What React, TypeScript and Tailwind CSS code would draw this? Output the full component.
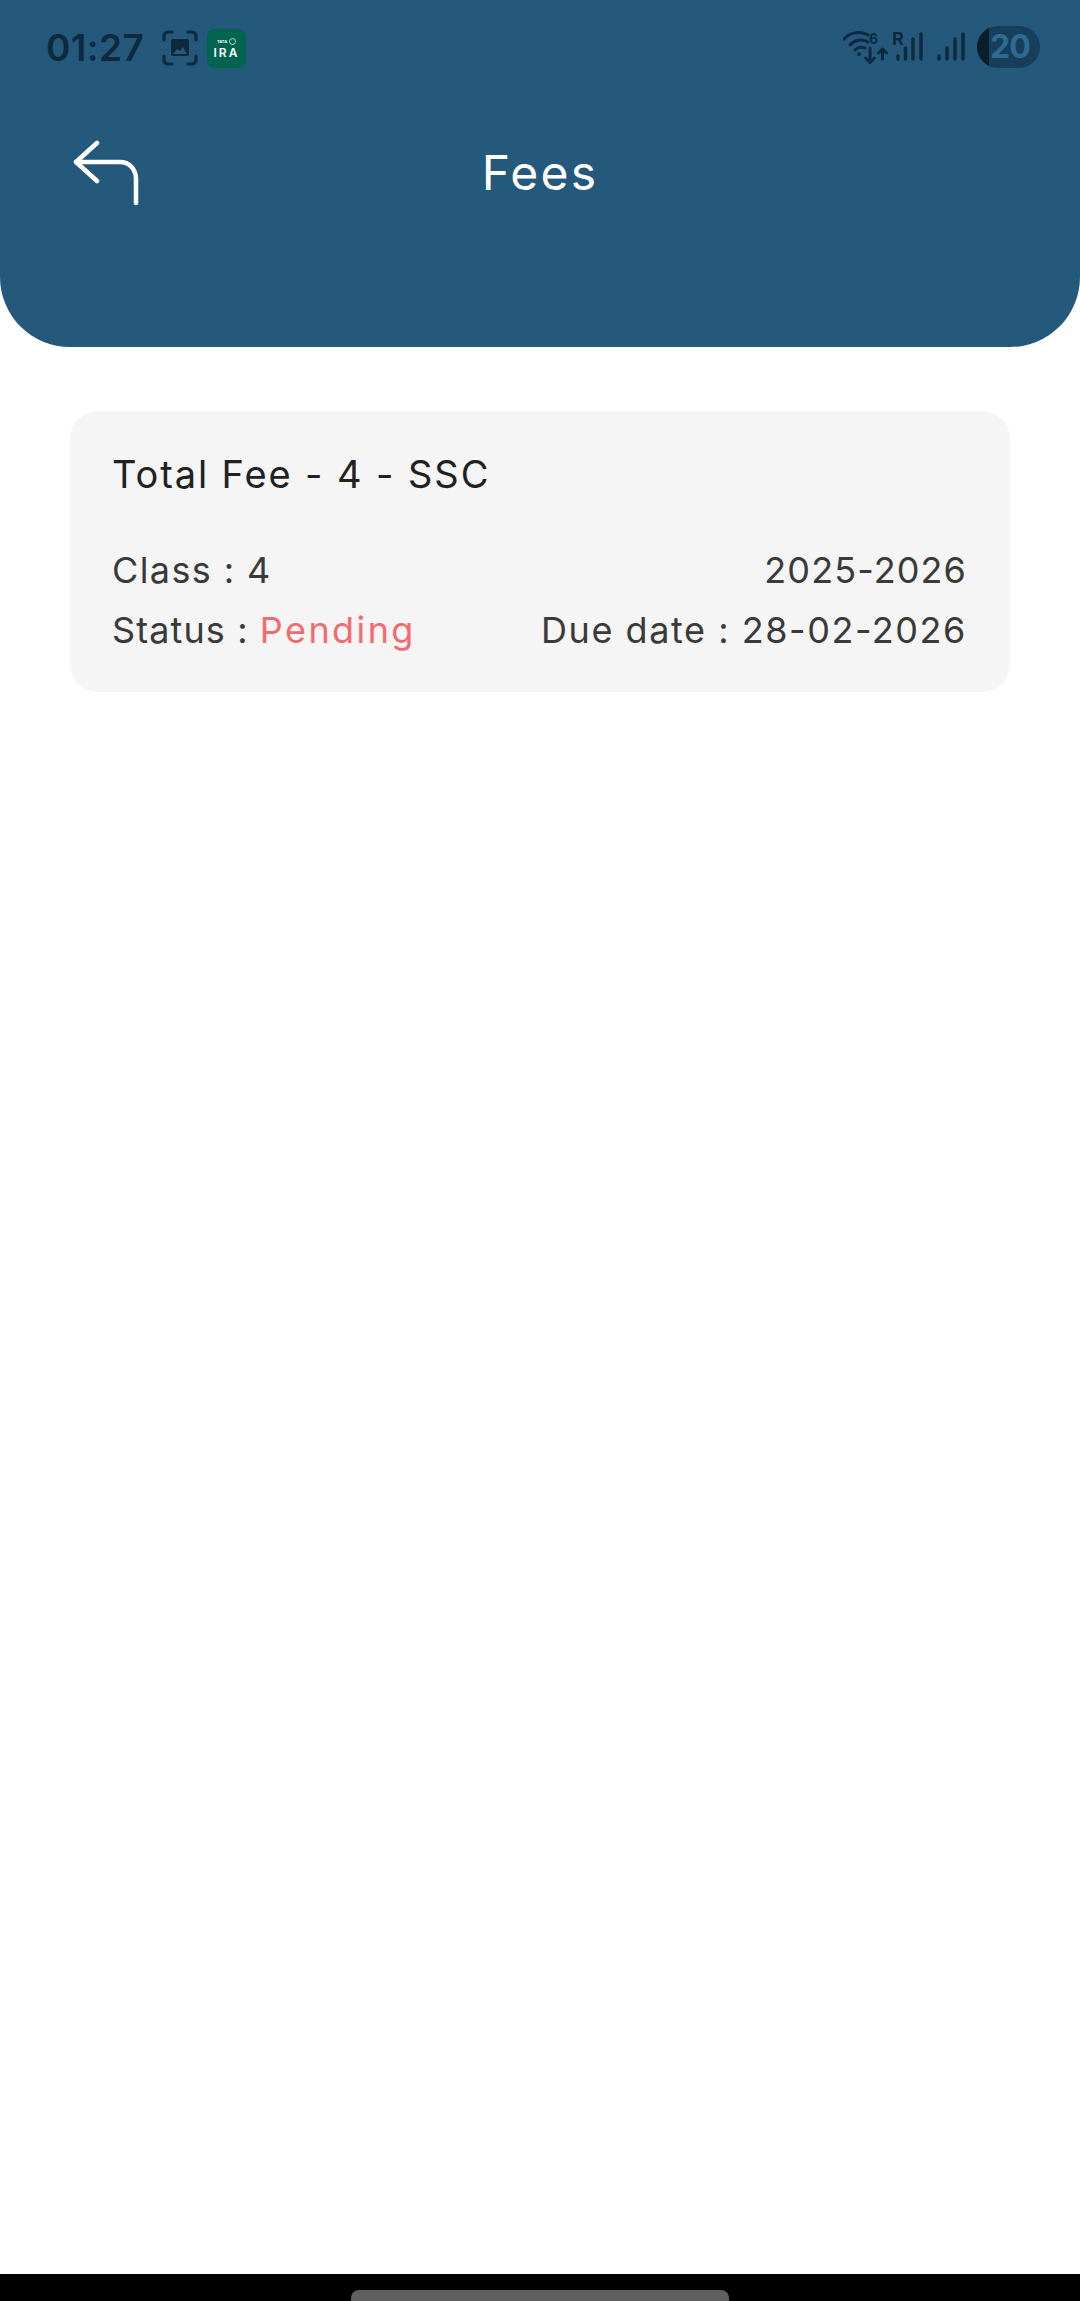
export default function App() {
  const font = { fontFamily: '"Inter", "Liberation Sans", sans-serif' };
  return (
    <div className="flex h-[2301px] w-[1080px] flex-col overflow-hidden bg-white" style={font}>
      <header className="h-[347px] shrink-0 rounded-b-[70px] bg-[#24597b]">
        <div className="flex h-[96px] items-start justify-between pl-[46px] pr-[40px] pt-[26px]">
          <div className="flex items-center">
            <span className="w-[116px] text-[37px] font-semibold leading-[44px] tracking-[0.4px] text-[#0e2a3e]">01:27</span>
            <svg className="h-[36px] w-[36px]" viewBox="0 0 36 36" fill="none">
              <path d="M2 10V6a4 4 0 0 1 4-4h4M26 2h4a4 4 0 0 1 4 4v4M34 26v4a4 4 0 0 1-4 4h-4M10 34H6a4 4 0 0 1-4-4v-4" stroke="#0e2a3e" strokeWidth="3.2" strokeLinecap="round" />
              <path d="M9 11a2 2 0 0 1 2-2h14a2 2 0 0 1 2 2v13a2 2 0 0 1-2 2H11a2 2 0 0 1-2-2z" fill="#0e2a3e" />
              <path d="M11 24l4-5 3 2 3-4 4 7z" fill="#24597b" />
            </svg>
            <div className="ml-[9px] flex h-[39px] w-[39px] flex-col items-center justify-center rounded-[8px] bg-[#00644f] text-white">
              <div className="flex items-center gap-[2px]">
                <span className="text-[4px] font-bold leading-[7px]">TATA</span>
                <span className="h-[7px] w-[7px] rounded-full border border-white/70" />
              </div>
              <span className="mt-[2px] text-[12px] font-semibold leading-[12px] tracking-[2px]">IRA</span>
            </div>
          </div>
          <div className="flex items-center">
            <svg className="h-[42px] w-[126px]" viewBox="0 0 126 42" fill="none">
              <g stroke="#0e2a3e" strokeWidth="3" strokeLinecap="round" strokeLinejoin="round">
                <path d="M1 13C6 7 17 4 25 9" />
                <path d="M7 19c3-4 11-7 18-3" />
                <path d="M12 24c3-3 7-3 10-2" />
                <path d="M27 22v14M22.500 32l4.500 4.500 4.500-4.500" />
                <path d="M39.500 33V23M35.500 27l4-4 4 4" />
                <path d="M55 33v-3M62.500 33V22M70 33V13M78 33V8" strokeWidth="3.5" />
                <path d="M96 33v-3M104 33V22M112 33V13M120 33V8" strokeWidth="3.5" />
              </g>
              <circle cx="16" cy="28" r="2" fill="#0e2a3e" />
              <text x="26" y="18" fontSize="14" fontWeight="700" fill="#0e2a3e">6</text>
              <text x="49" y="19" fontSize="18" fontWeight="700" fill="#0e2a3e">R</text>
            </svg>
            <div className="ml-[8px] flex h-[42px] w-[63px] items-center overflow-hidden rounded-full bg-[#173f5c]">
              <div className="h-full w-[12px] shrink-0 bg-[#0a1f2e]" />
              <span className="ml-[1px] text-[32px] font-bold leading-none tracking-[-1px] text-[#2f6a92]">20</span>
            </div>
          </div>
        </div>
        <div className="relative flex h-[80px] items-center justify-center">
          <svg className="absolute left-[72px] top-[44px] h-[70px] w-[72px]" viewBox="0 0 72 70" fill="none" stroke="#ffffff" strokeWidth="4.5" strokeLinecap="round" strokeLinejoin="round">
            <path d="M25 3L4 22l21 19" />
            <path d="M4 22h44c9 0 16 7 16 17v24" />
          </svg>
          <h1 className="relative top-[37px] text-[48px] font-normal leading-none tracking-[2.2px] text-white">Fees</h1>
        </div>
      </header>
      <main className="flex-1 px-[70px] pt-[64px]">
        <section className="h-[281px] rounded-[28px] bg-[#f5f5f5] pl-[42px] pr-[43px] pt-[38px]">
          <h2 className="text-[38px] leading-[50px] tracking-[1.9px] text-[#212121]">Total Fee - 4 - SSC</h2>
          <div className="mt-[46px] flex flex-col gap-[10px] text-[36px] leading-[50px] tracking-[1.4px] text-[#3a3a3a]">
            <div className="flex justify-between">
              <span>Class : 4</span>
              <span className="tracking-[1.1px]">2025-2026</span>
            </div>
            <div className="flex justify-between">
              <span className="tracking-[1.1px]">Status : <span className="tracking-[2.4px] text-[#f46a6f]">Pending</span></span>
              <span className="tracking-[1.55px]">Due date : 28-02-2026</span>
            </div>
          </div>
        </section>
      </main>
      <div className="flex h-[27px] shrink-0 items-start justify-center bg-black pt-[16px]">
        <div className="h-[20px] w-[378px] rounded-[8px] bg-[#5f5f5f]" />
      </div>
    </div>
  );
}
